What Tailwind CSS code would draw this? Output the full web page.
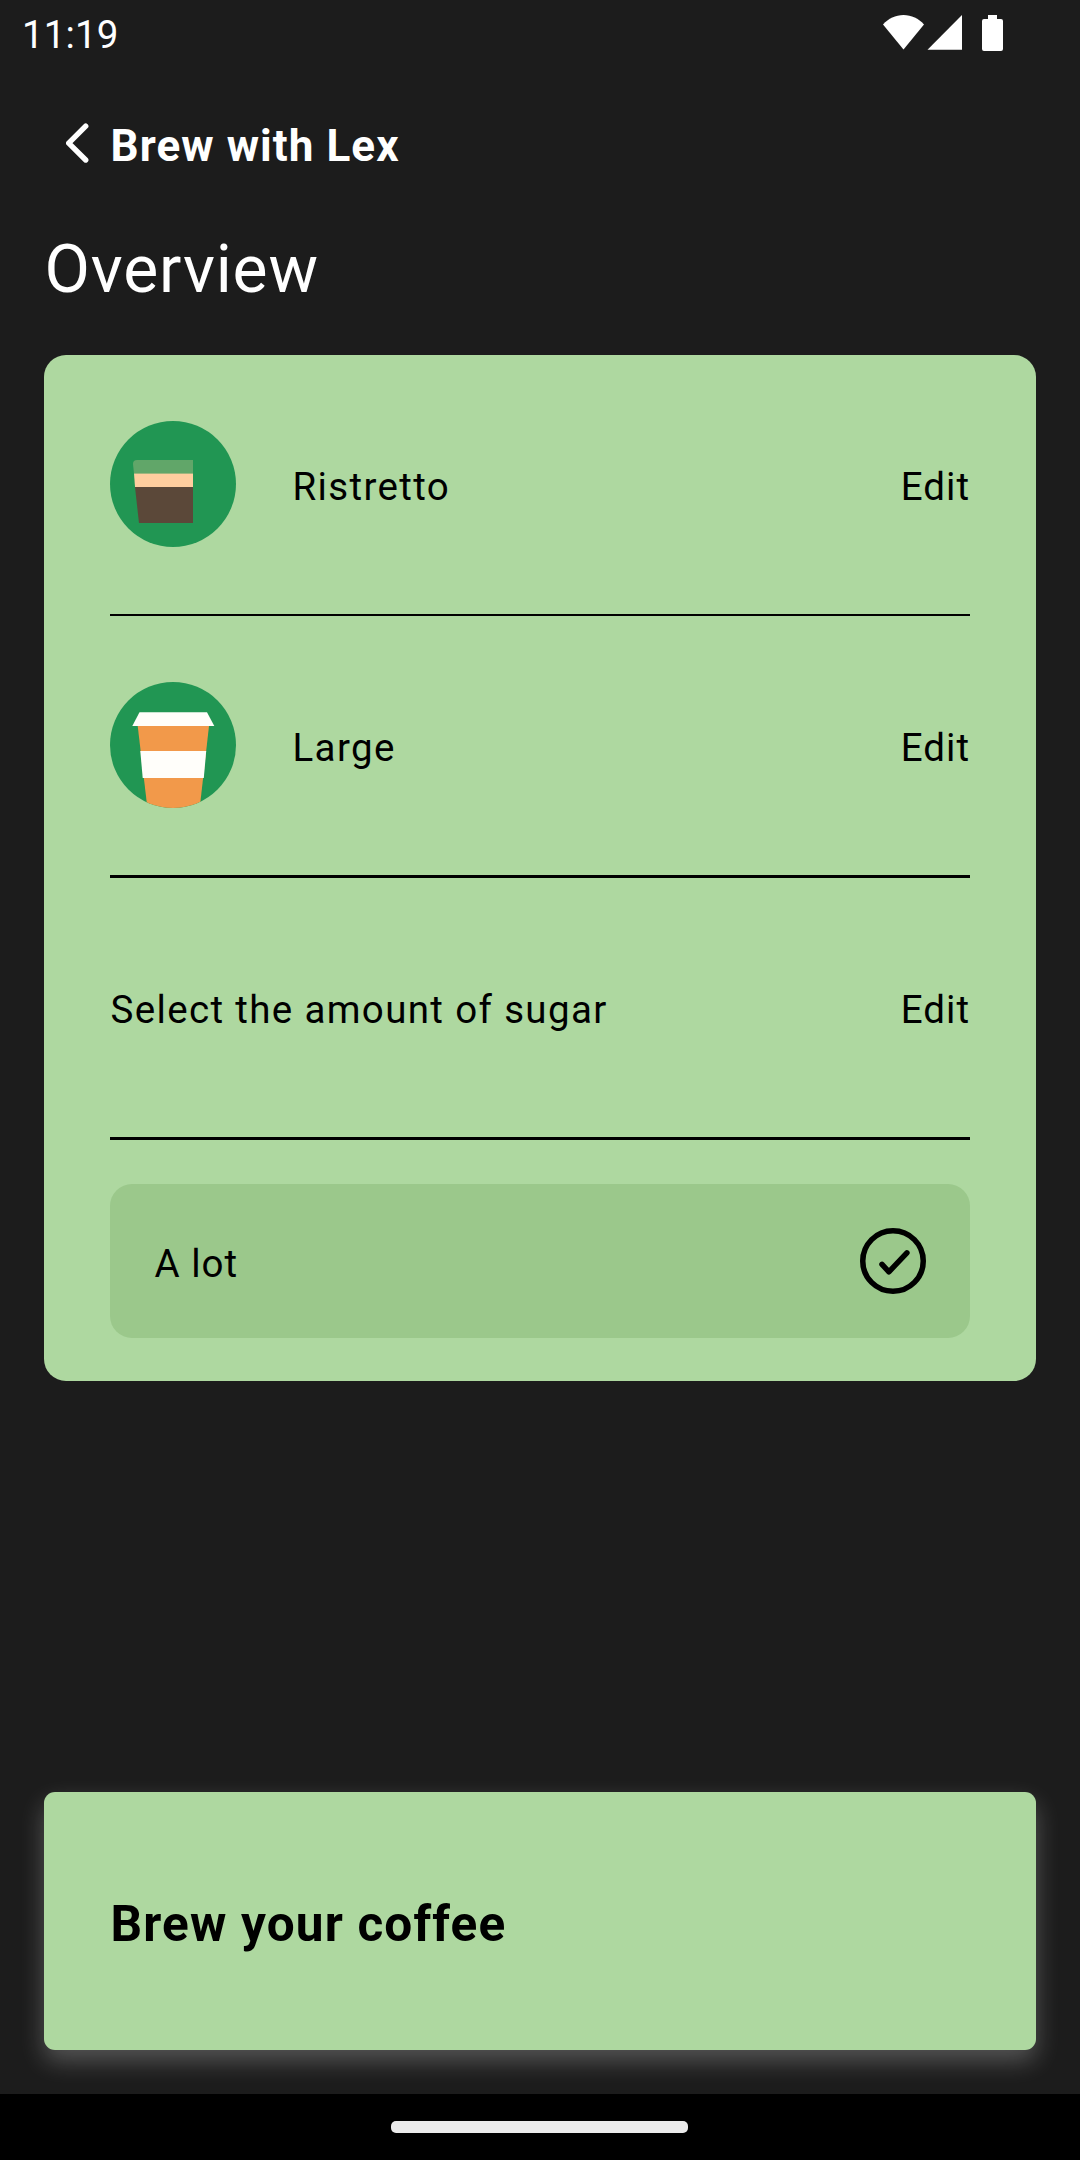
<!DOCTYPE html>
<html lang="en">
<head>
<meta charset="utf-8">
<title>Brew with Lex</title>
<script src="https://cdn.jsdelivr.net/npm/@tailwindcss/browser@4"></script>
</head>
<body class="bg-[#1c1c1c]">
<div class="flex h-[2160px] w-[1080px] flex-col overflow-hidden bg-[#1c1c1c] font-['Roboto',sans-serif]">
  <!-- Status bar -->
  <div class="flex h-[66px] shrink-0 items-start justify-between pl-[22px] text-white">
    <span class="pt-[10px] text-[38.5px] leading-[50px] tracking-[0.15px]">11:19</span>
    <svg class="h-[66px] w-[200px]" viewBox="880 0 200 66" fill="currentColor">
      <path d="M883 24.500C888.500 18.500 895.500 15 903.500 15S918.500 18.500 924 24.500L903.500 49.500Z"/>
      <path d="M927.500 49.800H962V15Z"/>
      <path d="M988 15H997V19H1001a2 2 0 0 1 2 2V49a2 2 0 0 1-2 2H984a2 2 0 0 1-2-2V21a2 2 0 0 1 2-2H988Z"/>
    </svg>
  </div>
  <!-- Header -->
  <header class="flex h-[156px] shrink-0 items-center pl-[66px] text-white">
    <svg class="h-[44px] w-[44px]" viewBox="0 0 44 44" fill="none" stroke="currentColor" stroke-width="5.400" stroke-linecap="round" stroke-linejoin="round"><path d="M19.700 4.200L2.700 21.200L19.700 38"/></svg>
    <h1 class="pt-[4px] pl-[0.5px] text-[44px] leading-[54px] font-bold tracking-[1.07px]">Brew with Lex</h1>
  </header>
  <h2 class="h-[133px] shrink-0 pt-px pl-[44.6px] text-[66px] leading-[94px] tracking-[0.85px] text-white">Overview</h2>
  <!-- Order summary -->
  <main class="mx-[44px] flex h-[1026px] shrink-0 flex-col rounded-[22px] bg-[#aed8a0] px-[66px] text-[38.5px] leading-[46px] tracking-[1.35px] text-black">
    <section class="flex h-[261px] items-center border-b-2 border-black">
      <svg class="mb-px h-[126px] w-[126px]" viewBox="0 0 126 126">
        <circle cx="63" cy="63" r="63" fill="#219653"/>
        <path d="M27 39H83V52.500H24L23 43Q23 39 27 39Z" fill="#61a669"/>
        <path d="M24 52.500H83V66H25Z" fill="#ffce9f"/>
        <path d="M25 66H83V102H29Z" fill="#5b4839"/>
      </svg>
      <span class="grow pt-[4px] pl-[56.5px]">Ristretto</span>
      <span class="pt-[4px] tracking-[1px]">Edit</span>
    </section>
    <section class="flex h-[262px] items-center border-b-3 border-black">
      <svg class="mb-px h-[126px] w-[126px]" viewBox="0 0 126 126">
        <defs><clipPath id="disc"><circle cx="63" cy="63" r="63"/></clipPath></defs>
        <circle cx="63" cy="63" r="63" fill="#219653"/>
        <g clip-path="url(#disc)">
          <path d="M27.700 44H99L89.700 126H37.400Z" fill="#f2994a"/>
          <path d="M29.500 30.300H97L104.300 44H22.300Z" fill="#fffefa"/>
          <path d="M30.300 69H96.200L93.800 96H32.700Z" fill="#fffefa"/>
        </g>
      </svg>
      <span class="grow pt-[4px] pl-[56.5px]">Large</span>
      <span class="pt-[4px] tracking-[1px]">Edit</span>
    </section>
    <section class="flex h-[262px] items-center border-b-3 border-black">
      <span class="grow pt-[4px] pl-[0.5px]">Select the amount of sugar</span>
      <span class="pt-[4px] tracking-[1px]">Edit</span>
    </section>
    <div class="mt-[44px] flex h-[154px] items-center rounded-[22px] bg-[#9bc88b] px-[44px]">
      <span class="grow pt-[6px] pl-[0.5px] tracking-[1px]">A lot</span>
      <svg class="h-[66px] w-[66px]" viewBox="0 0 66 66" fill="none" stroke="#000" stroke-width="5.500" stroke-linecap="round" stroke-linejoin="round">
        <circle cx="33" cy="33" r="30.250"/>
        <path d="M22 36.300L28.900 43.800L46.900 24.800"/>
      </svg>
    </div>
  </main>
  <!-- Primary action -->
  <button class="mx-[44px] mt-auto mb-[44px] flex h-[258px] shrink-0 items-center rounded-[11px] bg-[#aed8a0] pt-[6px] pr-[66px] pl-[66.5px] text-[49.5px] leading-[60px] font-bold tracking-[1.16px] text-black shadow-[0_11px_24px_rgba(255,255,255,0.25)]">Brew your coffee</button>
  <!-- Gesture bar -->
  <div class="flex h-[66px] shrink-0 items-center justify-center bg-black pr-px">
    <div class="h-[12px] w-[297px] rounded-[5px] bg-[#ebebeb]"></div>
  </div>
</div>
</body>
</html>
